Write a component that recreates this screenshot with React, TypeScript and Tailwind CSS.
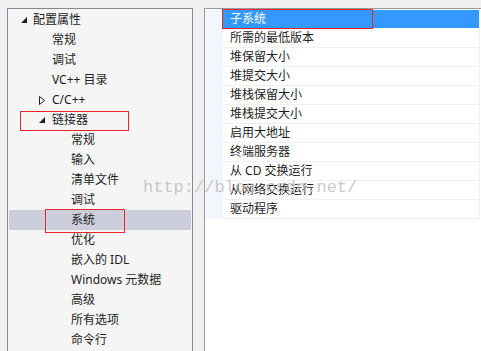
import React from 'react'

const ui = "font-['Noto_Sans','Noto_Sans_CJK_SC',sans-serif]"

type Node = { label: string; level: 0 | 1 | 2; toggle?: 'open' | 'closed'; selected?: boolean; boxed?: boolean }

const tree: Node[] = [
  { label: '配置属性', level: 0, toggle: 'open' },
  { label: '常规', level: 1 },
  { label: '调试', level: 1 },
  { label: 'VC++ 目录', level: 1 },
  { label: 'C/C++', level: 1, toggle: 'closed' },
  { label: '链接器', level: 1, toggle: 'open', boxed: true },
  { label: '常规', level: 2 },
  { label: '输入', level: 2 },
  { label: '清单文件', level: 2 },
  { label: '调试', level: 2 },
  { label: '系统', level: 2, selected: true, boxed: true },
  { label: '优化', level: 2 },
  { label: '嵌入的 IDL', level: 2 },
  { label: 'Windows 元数据', level: 2 },
  { label: '高级', level: 2 },
  { label: '所有选项', level: 2 },
  { label: '命令行', level: 2 },
]

const props = [
  '子系统',
  '所需的最低版本',
  '堆保留大小',
  '堆提交大小',
  '堆栈保留大小',
  '堆栈提交大小',
  '启用大地址',
  '终端服务器',
  '从 CD 交换运行',
  '从网络交换运行',
  '驱动程序',
]

const indent = { 0: 'pl-[24px]', 1: 'pl-[43px]', 2: 'pl-[62px]' } as const

function Toggle({ kind }: { kind: 'open' | 'closed' }) {
  if (kind === 'open') {
    return (
      <svg width="6" height="6" viewBox="0 0 6 6" className="shrink-0">
        <polygon points="6,0 6,6 0,6" fill="#1e1e1e" />
      </svg>
    )
  }
  return (
    <svg width="6" height="9" viewBox="0 0 6 9" className="shrink-0">
      <polygon points="0.5,0.5 5.5,4.5 0.5,8.5" fill="none" stroke="#1e1e1e" strokeWidth="1" />
    </svg>
  )
}

function TreeRow({ node }: { node: Node }) {
  return (
    <div
      className={`relative flex h-[20px] items-center ${indent[node.level]} ${node.selected ? 'bg-[#cccedb]' : ''}`}
    >
      {node.toggle && (
        <span className="absolute flex w-[10px] justify-center" style={{ left: node.level === 0 ? 10 : 28 }}>
          <Toggle kind={node.toggle} />
        </span>
      )}
      <span className="whitespace-nowrap">{node.label}</span>
      {node.boxed && node.level === 1 && (
        <span className="absolute left-[11px] top-[1px] h-[20px] w-[109px] border border-[#e8262b]" />
      )}
      {node.boxed && node.level === 2 && (
        <span className="absolute left-[36px] top-[-1px] h-[24px] w-[80px] border border-[#e8262b]" />
      )}
    </div>
  )
}

export default function App() {
  return (
    <div className={`relative h-[351px] w-[481px] overflow-hidden bg-[#f0f0f0] text-[12px] text-[#1e1e1e] ${ui}`}>
      <div className="flex h-full gap-[11px] pl-[7px] pt-[8px]">
        {/* tree */}
        <div className="h-full w-[186px] shrink-0 border-l border-r border-t border-[#828790] bg-[#f5f5f5] px-[1px] pt-[1px]">
          {tree.map((n, i) => (
            <TreeRow key={i} node={n} />
          ))}
        </div>

        {/* property grid */}
        <div className="h-full flex-1 border-l border-t border-[#9a9a9a] bg-white pt-[1px]">
          <div className="flex w-[275px]">
            <div className="w-[18px] shrink-0 bg-[#f3f6fc]" />
            <div className="flex-1 border-r border-[#eceef5]">
              {props.map((p, i) => (
                <div
                  key={p}
                  className={`relative flex h-[19px] items-center border-b pl-[7px] ${
                    i === 0 ? 'border-white bg-[#3399ff] text-white' : 'border-[#f0f0f0]'
                  }`}
                >
                  <span className="whitespace-nowrap">{p}</span>
                  {i === 0 && (
                    <span className="absolute left-[-1px] top-[-1px] h-[20px] w-[151px] border border-[#e8262b]" />
                  )}
                </div>
              ))}
            </div>
          </div>
        </div>
      </div>

      <span className="pointer-events-none absolute left-[143px] top-[175px] font-['Liberation_Mono',monospace] text-[17px] text-[#bdbdbd] opacity-80">
        http://blog.csdn.net/
      </span>
    </div>
  )
}
